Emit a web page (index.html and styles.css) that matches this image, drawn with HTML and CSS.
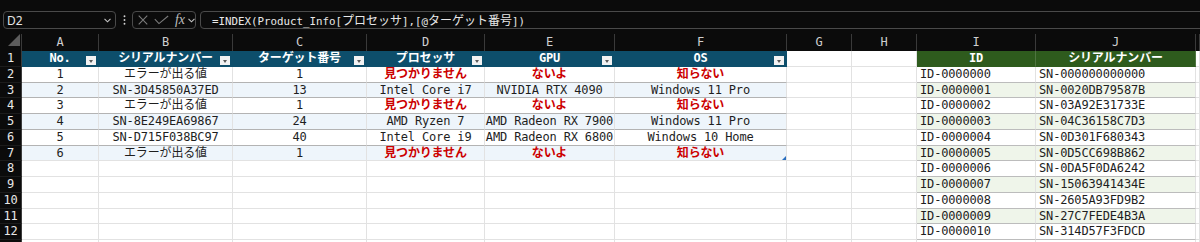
FILE: index.html
```html
<!DOCTYPE html>
<html lang="ja">
<head>
    <meta charset="UTF-8">
    <meta name="viewport" content="width=device-width, initial-scale=1.0">
    <title>Product Info</title>
    <link rel="stylesheet" href="styles.css">
</head>
<body>
    <!-- name box + formula bar -->
    <div class="toolbar">
        <div class="namebox">
            <span>D2</span>
            <svg class="chev" width="7" height="5" viewBox="0 0 7 5"><polyline points="0.5,0.8 3.5,3.8 6.5,0.8"/></svg>
        </div>
        <div class="dots">
            <svg width="3" height="10" viewBox="0 0 3 10"><circle cx="1.5" cy="1.2" r="0.95"/><circle cx="1.5" cy="5" r="0.95"/><circle cx="1.5" cy="8.8" r="0.95"/></svg>
        </div>
        <div class="fxbox">
            <svg class="cancel" width="10" height="10" viewBox="0 0 10 10"><path d="M0.7,0.7 L9.3,9.3 M9.3,0.7 L0.7,9.3"/></svg>
            <svg class="enter" width="15" height="10" viewBox="0 0 15 10"><polyline points="0.8,4.2 5,8.6 14.2,1"/></svg>
            <span class="fx">fx</span>
            <svg class="chev" width="7" height="5" viewBox="0 0 7 5"><polyline points="0.5,0.8 3.5,3.8 6.5,0.8"/></svg>
        </div>
        <div class="formula">=INDEX(Product_Info[<span class="jp">プロセッサ</span>],[@<span class="jp">ターゲット番号</span>])</div>
    </div>

    <!-- worksheet -->
    <div class="sheet">
        <div class="row colhdr">
            <div class="corner"></div><div>A</div><div>B</div><div>C</div><div>D</div><div>E</div><div>F</div><div>G</div><div>H</div><div>I</div><div>J</div><div></div>
        </div>
        <div class="row">
            <div class="rh">1</div>
            <div class="th">No.<span class="flt"></span></div>
            <div class="th">シリアルナンバー<span class="flt"></span></div>
            <div class="th">ターゲット番号<span class="flt"></span></div>
            <div class="th">プロセッサ<span class="flt"></span></div>
            <div class="th">GPU<span class="flt"></span></div>
            <div class="th">OS<span class="flt"></span></div>
            <div></div><div></div>
            <div class="gh">ID</div>
            <div class="gh">シリアルナンバー</div>
            <div></div>
        </div>
        <div class="row">
            <div class="rh">2</div>
            <div class="t">1</div><div class="t">エラーが出る値</div><div class="t">1</div>
            <div class="t e">見つかりません</div><div class="t e">ないよ</div><div class="t e">知らない</div>
            <div></div><div></div>
            <div class="r">ID-0000000</div><div class="r">SN-000000000000</div><div></div>
        </div>
        <div class="row odd">
            <div class="rh">3</div>
            <div class="t">2</div><div class="t">SN-3D45850A37ED</div><div class="t">13</div>
            <div class="t">Intel Core i7</div><div class="t">NVIDIA RTX 4090</div><div class="t">Windows 11 Pro</div>
            <div></div><div></div>
            <div class="r">ID-0000001</div><div class="r">SN-0020DB79587B</div><div></div>
        </div>
        <div class="row">
            <div class="rh">4</div>
            <div class="t">3</div><div class="t">エラーが出る値</div><div class="t">1</div>
            <div class="t e">見つかりません</div><div class="t e">ないよ</div><div class="t e">知らない</div>
            <div></div><div></div>
            <div class="r">ID-0000002</div><div class="r">SN-03A92E31733E</div><div></div>
        </div>
        <div class="row odd">
            <div class="rh">5</div>
            <div class="t">4</div><div class="t">SN-8E249EA69867</div><div class="t">24</div>
            <div class="t">AMD Ryzen 7</div><div class="t">AMD Radeon RX 7900</div><div class="t">Windows 11 Pro</div>
            <div></div><div></div>
            <div class="r">ID-0000003</div><div class="r">SN-04C36158C7D3</div><div></div>
        </div>
        <div class="row">
            <div class="rh">6</div>
            <div class="t">5</div><div class="t">SN-D715F038BC97</div><div class="t">40</div>
            <div class="t">Intel Core i9</div><div class="t">AMD Radeon RX 6800</div><div class="t">Windows 10 Home</div>
            <div></div><div></div>
            <div class="r">ID-0000004</div><div class="r">SN-0D301F680343</div><div></div>
        </div>
        <div class="row odd last">
            <div class="rh">7</div>
            <div class="t">6</div><div class="t">エラーが出る値</div><div class="t">1</div>
            <div class="t e">見つかりません</div><div class="t e">ないよ</div><div class="t e">知らない<span class="handle"></span></div>
            <div></div><div></div>
            <div class="r">ID-0000005</div><div class="r">SN-0D5CC698B862</div><div></div>
        </div>
        <div class="row">
            <div class="rh">8</div>
            <div></div><div></div><div></div><div></div><div></div><div></div><div></div><div></div>
            <div class="r">ID-0000006</div><div class="r">SN-0DA5F0DA6242</div><div></div>
        </div>
        <div class="row odd">
            <div class="rh">9</div>
            <div></div><div></div><div></div><div></div><div></div><div></div><div></div><div></div>
            <div class="r">ID-0000007</div><div class="r">SN-15063941434E</div><div></div>
        </div>
        <div class="row">
            <div class="rh">10</div>
            <div></div><div></div><div></div><div></div><div></div><div></div><div></div><div></div>
            <div class="r">ID-0000008</div><div class="r">SN-2605A93FD9B2</div><div></div>
        </div>
        <div class="row odd">
            <div class="rh">11</div>
            <div></div><div></div><div></div><div></div><div></div><div></div><div></div><div></div>
            <div class="r">ID-0000009</div><div class="r">SN-27C7FEDE4B3A</div><div></div>
        </div>
        <div class="row">
            <div class="rh">12</div>
            <div></div><div></div><div></div><div></div><div></div><div></div><div></div><div></div>
            <div class="r">ID-0000010</div><div class="r">SN-314D57F3FDCD</div><div></div>
        </div>
        <div class="row">
            <div class="rh"></div>
            <div></div><div></div><div></div><div></div><div></div><div></div><div></div><div></div>
            <div class="r"></div><div class="r"></div><div></div>
        </div>
    </div>
</body>
</html>
```

FILE: styles.css
```css
/* sheet styles */
body {
    margin: 0;
    height: 242px;
    overflow: hidden;
    background-color: #0b0b0b;
    font-family: "DejaVu Sans Mono", "Noto Sans CJK JP", monospace;
    font-size: 12px;
}

/* ---- formula bar ---- */
.toolbar {
    display: flex;
    height: 34px;
    padding: 11px 0 0 3px;
    box-sizing: border-box;
}

.namebox {
    width: 113px;
    height: 18px;
    box-sizing: border-box;
    border: 1px solid #4a4a4a;
    border-radius: 4px;
    display: flex;
    align-items: center;
    justify-content: space-between;
    padding: 0 4px 0 3px;
    color: #e6e6e6;
    font-family: "Noto Sans", sans-serif;
    font-size: 12px;
}

.chev polyline {
    fill: none;
    stroke: #c4c4c4;
    stroke-width: 1.1;
}

.dots {
    width: 16px;
    height: 18px;
    display: flex;
    align-items: center;
    justify-content: center;
}

.dots circle {
    fill: #d2d2d2;
}

.fxbox {
    width: 64px;
    height: 18px;
    box-sizing: border-box;
    border: 1px solid #4a4a4a;
    border-radius: 4px;
    display: flex;
    align-items: center;
    padding-left: 5px;
}

.cancel path,
.enter polyline {
    fill: none;
    stroke: #7c7c7c;
    stroke-width: 1.1;
}

.enter {
    margin-left: 6px;
}

.fx {
    margin-left: 6px;
    font-family: "Liberation Serif", serif;
    font-style: italic;
    font-size: 14px;
    line-height: 16px;
    color: #bdbdbd;
}

.fxbox .chev {
    margin-left: 3px;
}

.formula {
    flex: 1;
    height: 18px;
    box-sizing: border-box;
    margin: 0 -8px 0 4px;
    border: 1px solid #4a4a4a;
    border-radius: 4px;
    padding-left: 11px;
    color: #e8e8e8;
    font-size: 10.8px;
    line-height: 16px;
    white-space: nowrap;
}

.formula .jp {
    font-family: "Noto Sans CJK JP", sans-serif;
    font-size: 12px;
}

/* ---- grid ---- */
.sheet {
    display: grid;
    grid-template-columns: 22px 77px 134px 134px 118px 130px 172px 65px 65px 119px 160px 1fr;
    grid-template-rows: 17px;
    grid-auto-rows: 15.75px;
    height: 208px;
    overflow: hidden;
    letter-spacing: -0.15px;
}

.row {
    display: contents;
}

.row > div {
    position: relative;
    box-sizing: border-box;
    border-right: 1px solid #e2e2e2;
    border-bottom: 1px solid #e2e2e2;
    background-color: #fff;
    color: #1e1e1e;
    line-height: 15px;
    text-align: center;
    white-space: nowrap;
}

.colhdr > div {
    background-color: #0b0b0b;
    color: #cfcfcf;
    border-right-color: #3a3a3a;
    border-bottom: none;
    line-height: 17px;
}

.corner::after {
    content: "";
    position: absolute;
    right: 1px;
    bottom: 5px;
    border-style: solid;
    border-width: 0 0 12px 12px;
    border-color: transparent transparent #5c5c5c transparent;
}

.row > .rh {
    background-color: #0b0b0b;
    color: #e8e8e8;
    border-right-color: #3c3c3c;
    border-bottom-color: #1c1c1c;
}

/* product table */
.row > .th {
    background-color: #0d4e6b;
    border-color: #0d4e6b;
    color: #fff;
    font-weight: bold;
}

.flt {
    position: absolute;
    right: 2px;
    top: 5px;
    width: 10px;
    height: 9px;
    background-color: #f2f2f2;
}

.flt::after {
    content: "";
    position: absolute;
    left: 3px;
    top: 4px;
    border-style: solid;
    border-width: 3px 2px 0 2px;
    border-color: #5a5a5a transparent transparent transparent;
}

.row > .t {
    border-bottom-color: #b3b3b3;
}

.last > .t {
    border-bottom-color: #e2e2e2;
}

.odd > .t {
    background-color: #eef5fb;
}

.row > .e {
    color: #cc0000;
    font-weight: bold;
}

.handle {
    position: absolute;
    right: 0;
    bottom: 0;
    border-style: solid;
    border-width: 0 0 4px 4px;
    border-color: transparent transparent #2a6fbf transparent;
}

/* serial table */
.row > .gh {
    background-color: #2e5b1d;
    border-color: #2e5b1d;
    border-right-color: #4f7541;
    color: #fff;
    font-weight: bold;
}

.row > .r {
    text-align: left;
    padding-left: 3px;
    border-bottom-color: #bcbcbc;
}

.odd > .r {
    background-color: #eff5ea;
}
```
